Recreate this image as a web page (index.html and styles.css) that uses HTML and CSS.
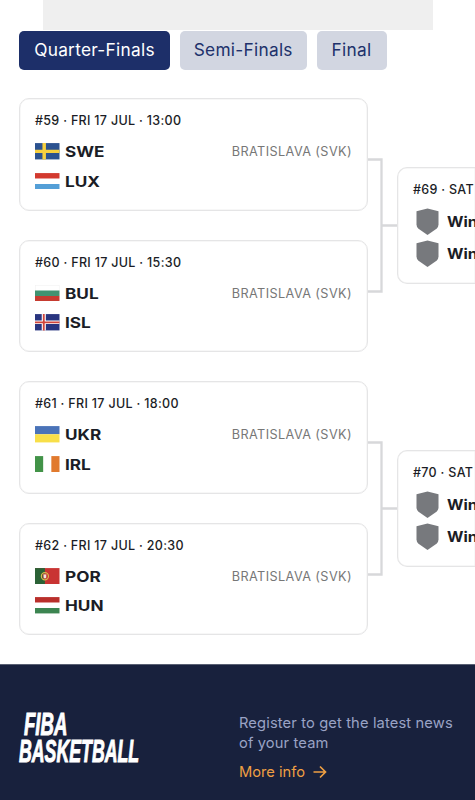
FILE: index.html
```html
<!DOCTYPE html>
<html lang="en">
<head>
<meta charset="utf-8">
<meta name="viewport" content="width=device-width, initial-scale=1">
<title>Bracket</title>
<link rel="stylesheet" href="styles.css">
</head>
<body>
<div class="banner"></div>
<nav class="tabs">
  <a class="tab active">Quarter-Finals</a>
  <a class="tab semi">Semi-Finals</a>
  <a class="tab final">Final</a>
</nav>
<main class="bracket">
  <section class="round">
    <article class="card">
      <div class="meta">#59 · FRI 17 JUL · 13:00</div>
      <div class="row"><svg class="flag" viewBox="0 0 24 16"><path fill="#2b5290" d="M0 0h24v16H0z"/><path fill="#f6d03f" d="M7.3 0h3.4v16H7.3zM0 6.5h24v3.2H0z"/></svg><b class="team">SWE</b><span class="place">BRATISLAVA (SVK)</span></div>
      <div class="row"><svg class="flag" viewBox="0 0 24 16"><path fill="#fff" d="M0 0h24v16H0z"/><path fill="#d33a2f" d="M0 0h24v5.3H0z"/><path fill="#549fd7" d="M0 10.7h24V16H0z"/></svg><b class="team">LUX</b></div>
    </article>
    <article class="card">
      <div class="meta">#60 · FRI 17 JUL · 15:30</div>
      <div class="row"><svg class="flag" viewBox="0 0 24 16"><path fill="#f0f0f0" d="M0 0h24v6H0z"/><path fill="#fff" d="M.5.5h23V6H.5z"/><path fill="#409371" d="M0 5.3h24v5.4H0z"/><path fill="#c63b30" d="M0 10.7h24V16H0z"/></svg><b class="team">BUL</b><span class="place">BRATISLAVA (SVK)</span></div>
      <div class="row"><svg class="flag" viewBox="0 0 24 16"><path fill="#29357f" d="M0 0h24v16H0z"/><path fill="#fff" d="M6.6 0h4v16h-4zM0 6.3h24v3.5H0z"/><path fill="#d0453b" d="M7.7 0h1.8v16H7.7zM0 7.2h24v1.7H0z"/></svg><b class="team">ISL</b></div>
    </article>
    <article class="card">
      <div class="meta">#61 · FRI 17 JUL · 18:00</div>
      <div class="row"><svg class="flag" viewBox="0 0 24 16"><path fill="#4a73b8" d="M0 0h24v8H0z"/><path fill="#f8df49" d="M0 8h24v8H0z"/></svg><b class="team">UKR</b><span class="place">BRATISLAVA (SVK)</span></div>
      <div class="row"><svg class="flag" viewBox="0 0 24 16"><path fill="#fff" d="M0 0h24v16H0z"/><path fill="#429348" d="M0 0h8v16H0z"/><path fill="#e17a2e" d="M16 0h8v16h-8z"/></svg><b class="team">IRL</b></div>
    </article>
    <article class="card">
      <div class="meta">#62 · FRI 17 JUL · 20:30</div>
      <div class="row"><svg class="flag" viewBox="0 0 24 16"><path fill="#c93433" d="M0 0h24v16H0z"/><path fill="#2b6236" d="M0 0h9.7v16H0z"/><circle cx="9.7" cy="8" r="3.5" fill="none" stroke="#d8bd4b" stroke-width="1.1"/><path d="M8 5.9h3.4v2.9a1.7 1.7 0 0 1-3.4 0z" fill="#f0e6e3" stroke="#c94a3c" stroke-width=".8"/></svg><b class="team">POR</b><span class="place">BRATISLAVA (SVK)</span></div>
      <div class="row"><svg class="flag" viewBox="0 0 24 16"><path fill="#fff" d="M0 0h24v16H0z"/><path fill="#b92f2b" d="M0 0h24v5.3H0z"/><path fill="#3c8551" d="M0 10.7h24V16H0z"/></svg><b class="team">HUN</b></div>
    </article>
  </section>
  <section class="links">
    <svg viewBox="0 0 29 136"><path d="M0 1.5h13.5v132H0M13.5 67.5H29"/></svg>
    <svg viewBox="0 0 29 136"><path d="M0 1.5h13.5v132H0M13.5 67.5H29"/></svg>
  </section>
  <section class="round next">
    <article class="card">
      <div class="meta">#69 · SAT</div>
      <div class="row"><svg class="shield" viewBox="0 0 23 28"><path d="M.5 3.2 11.5.5l11 2.7v13.3q0 2.4-2 4.2L11.5 27l-9-6.3q-2-1.8-2-4.2z"/></svg><b class="team">Win</b></div>
      <div class="row"><svg class="shield" viewBox="0 0 23 28"><path d="M.5 3.2 11.5.5l11 2.7v13.3q0 2.4-2 4.2L11.5 27l-9-6.3q-2-1.8-2-4.2z"/></svg><b class="team">Win</b></div>
    </article>
    <article class="card">
      <div class="meta">#70 · SAT</div>
      <div class="row"><svg class="shield" viewBox="0 0 23 28"><path d="M.5 3.2 11.5.5l11 2.7v13.3q0 2.4-2 4.2L11.5 27l-9-6.3q-2-1.8-2-4.2z"/></svg><b class="team">Win</b></div>
      <div class="row"><svg class="shield" viewBox="0 0 23 28"><path d="M.5 3.2 11.5.5l11 2.7v13.3q0 2.4-2 4.2L11.5 27l-9-6.3q-2-1.8-2-4.2z"/></svg><b class="team">Win</b></div>
    </article>
  </section>
</main>
<footer class="footer">
  <div class="logo"><span class="fiba">FIBA</span><span class="ball">BASKETBALL</span></div>
  <div class="signup">
    <p>Register to get the latest news<br>of your team</p>
    <a class="more">More info<svg viewBox="0 0 14 14"><path d="M.5 7h12M7 1.5 12.5 7 7 12.5"/></svg></a>
  </div>
</footer>
</body>
</html>
```
FILE: styles.css
```css
* { box-sizing: border-box; }
html { overflow: hidden; }
body {
  margin: 0;
  width: 475px;
  height: 800px;
  overflow: hidden;
  background: #fff;
  color: #1b1d26;
  font-family: Inter, "Liberation Sans", Arial, sans-serif;
}
.banner { height: 30px; margin: 0 42.5px; background: #efefef; }
.tabs { display: flex; gap: 9.5px; padding-left: 19px; margin-top: .5px; }
.tab {
  height: 39px;
  width: 127.5px;
  border-radius: 5px;
  background: #d2d6e1;
  color: #20316b;
  font-size: 17.3px;
  line-height: 38.5px;
  letter-spacing: .27px;
  text-align: center;
  white-space: nowrap;
}
.tab.active { width: 151px; background: #1d2f69; color: #fff; }
.tab.final { width: 70px; }
.bracket {
  display: grid;
  grid-template-columns: 349px 29px 78px;
  height: 565.5px;
  margin: 28.5px 0 0 19px;
  padding-top: .3px;
}
.round { display: flex; flex-direction: column; gap: 29px; }
.card {
  height: 112.5px;
  flex: none;
  padding: 14px 15px;
  border: 1px solid #e5e5e6;
  box-shadow: inset 0 0 0 .5px #f0f0f0;
  border-radius: 10px;
}
.meta { height: 16px; font-size: 12.5px; font-weight: 500; line-height: 16px; letter-spacing: .31px; white-space: nowrap; }
.row { display: flex; align-items: center; height: 29.5px; }
.meta + .row { margin-top: 7.7px; }
.flag { width: 24.5px; height: 16.5px; flex: none; }
.team {
  margin-left: 5px;
  padding-top: 1px;
  font-size: 14.7px;
  line-height: 20px;
  transform: scaleX(1.17);
  transform-origin: left;
  white-space: nowrap;
}
.place { margin-left: auto; font-size: 12.7px; color: #777; letter-spacing: .4px; }
.links { display: flex; flex-direction: column; gap: 147px; padding-top: 59.5px; }
.links svg { width: 29px; height: 136px; flex: none; fill: none; stroke: #d7d8da; stroke-width: 2.3; }
.next { padding-top: 68.5px; gap: 166px; }
.next .card { height: 117px; padding-right: 0; border-right: 0; border-radius: 10px 0 0 10px; }
.next .row { height: 32px; }
.next .meta + .row { margin-top: 8px; }
.shield { width: 23px; height: 28px; margin-left: 3px; fill: #77797d; flex: none; }
.next .team { margin-left: 8px; padding-top: 0; font-size: 14.7px; transform: scaleX(1.08); }
.footer {
  display: grid;
  grid-template-columns: 220px 1fr;
  height: 136px;
  padding: 48px 0 0 19px;
  background: #18213d;
  border-top: 1px solid #596073;
}
.logo {
  margin-top: -2px;
  color: #fff;
  font-family: "Liberation Sans", Arial, sans-serif;
  font-size: 31px;
  font-weight: 700;
  font-style: italic;
  line-height: 27px;
}
.logo span { display: block; width: max-content; transform: scaleX(.572); transform-origin: left; -webkit-text-stroke: 1px #fff; }
.logo .fiba { margin-left: 5px; transform: scaleX(.6); }
.signup { color: #9aa3c5; font-size: 14.7px; line-height: 20px; letter-spacing: .13px; }
.signup p { margin: 0; white-space: nowrap; }
.more { display: flex; align-items: center; margin-top: 9px; color: #ee9f43; letter-spacing: 0; }
.more svg { width: 14px; height: 14px; margin-left: 8px; fill: none; stroke: #ee9f43; stroke-width: 1.7; }
```
